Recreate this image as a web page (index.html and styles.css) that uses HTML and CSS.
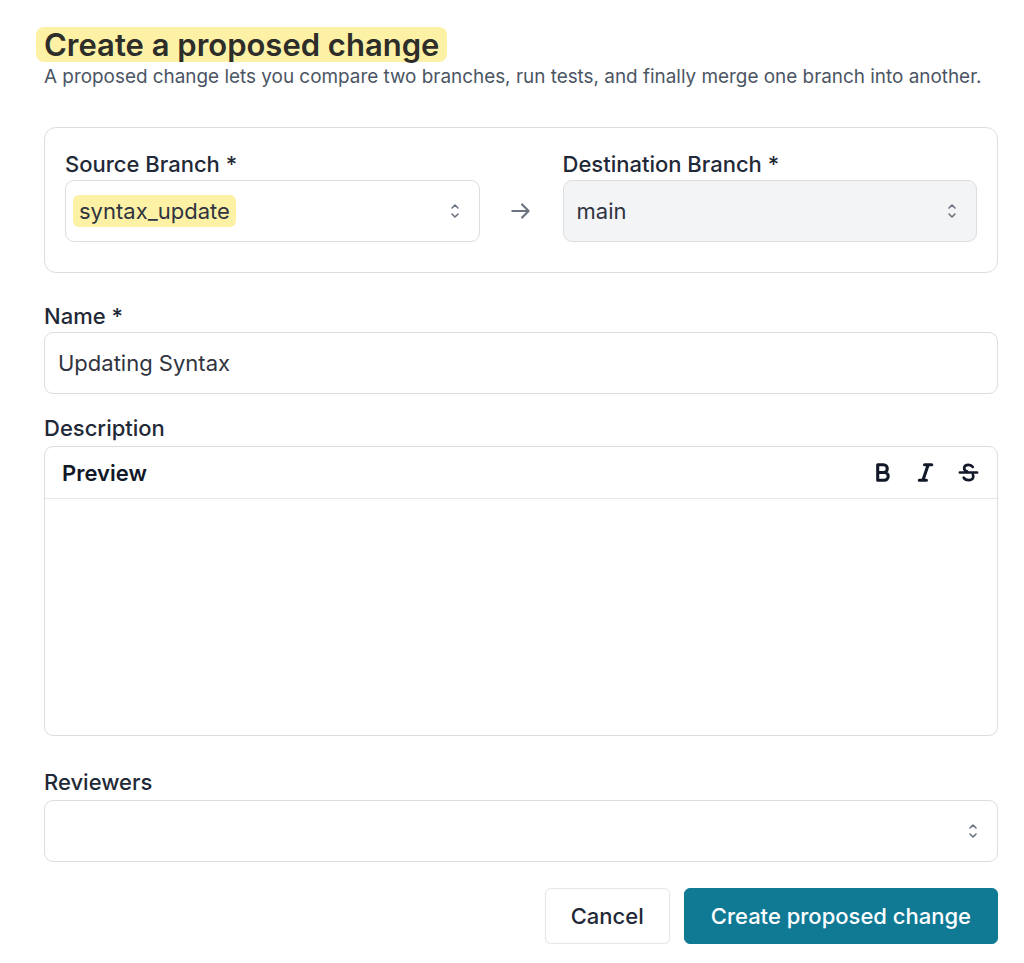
FILE: index.html
```html
<!DOCTYPE html>
<html lang="en">
<head>
<meta charset="utf-8">
<title>Create a proposed change</title>
<link rel="stylesheet" href="styles.css">
</head>
<body>
<main class="page">
  <h1 class="title"><span class="hl-title">Create a proposed change</span></h1>
  <p class="subtitle">A proposed change lets you compare two branches, run tests, and finally merge one branch into another.</p>

  <section class="branch-card">
    <div class="branch-field">
      <div class="label">Source Branch *</div>
      <div class="select">
        <span class="value"><span class="hl-value">syntax_update</span></span>
        <svg class="chev" viewBox="0 0 10 18" width="10" height="18"><path d="M2 6 L5 3 L8 6 M2 12 L5 15 L8 12" fill="none" stroke="#6b7280" stroke-width="1.6" stroke-linecap="round" stroke-linejoin="round"/></svg>
      </div>
    </div>
    <div class="arrow">
      <svg viewBox="0 0 24 24" width="26" height="26"><path d="M4 12h15M13 6l6 6-6 6" fill="none" stroke="#6b7280" stroke-width="2" stroke-linecap="round" stroke-linejoin="round"/></svg>
    </div>
    <div class="branch-field">
      <div class="label">Destination Branch *</div>
      <div class="select select-disabled">
        <span class="value">main</span>
        <svg class="chev" viewBox="0 0 10 18" width="10" height="18"><path d="M2 6 L5 3 L8 6 M2 12 L5 15 L8 12" fill="none" stroke="#6b7280" stroke-width="1.6" stroke-linecap="round" stroke-linejoin="round"/></svg>
      </div>
    </div>
  </section>

  <div class="field field-name">
    <div class="label">Name *</div>
    <div class="input">Updating Syntax</div>
  </div>

  <div class="field field-desc">
    <div class="label">Description</div>
    <div class="editor">
      <div class="editor-head">
        <span class="tab">Preview</span>
        <div class="tools">
          <svg viewBox="0 0 24 24" width="23" height="23"><path d="M7 4h6a4 4 0 0 1 0 8H7z M7 12h7a4 4 0 0 1 0 8H7z" fill="none" stroke="#111827" stroke-width="3.2" stroke-linejoin="round"/></svg>
          <svg viewBox="0 0 24 24" width="23" height="23"><path d="M5.5 20h7.5M11 4h7.5M9.3 20l5.5-16" fill="none" stroke="#111827" stroke-width="3.2" stroke-linecap="round" stroke-linejoin="round"/></svg>
          <svg viewBox="0 0 24 24" width="23" height="23"><path d="M16.5 6.2C15.6 4.9 14 4 12 4 9.2 4 7.5 5.6 7.5 7.5c0 1.6 1.1 2.7 3.2 3.4M16.6 14.6c.3.5.4 1 .4 1.5 0 2.2-2.1 3.9-5 3.9-2.3 0-4.1-1-5-2.6M3 12h18" fill="none" stroke="#111827" stroke-width="2.8" stroke-linecap="round" stroke-linejoin="round"/></svg>
        </div>
      </div>
      <div class="editor-body"></div>
    </div>
  </div>

  <div class="field field-reviewers">
    <div class="label">Reviewers</div>
    <div class="select">
      <span class="value"></span>
      <svg class="chev" viewBox="0 0 10 18" width="10" height="18"><path d="M2 6 L5 3 L8 6 M2 12 L5 15 L8 12" fill="none" stroke="#6b7280" stroke-width="1.6" stroke-linecap="round" stroke-linejoin="round"/></svg>
    </div>
  </div>

  <div class="actions">
    <button class="btn btn-cancel">Cancel</button>
    <button class="btn btn-primary">Create proposed change</button>
  </div>
</main>
</body>
</html>
```

FILE: styles.css
```css
* { box-sizing: border-box; }

html, body {
  margin: 0;
  padding: 0;
  background: #ffffff;
}

body {
  font-family: Inter, "Noto Sans", sans-serif;
  color: #1f2937;
}

.page {
  width: 954px;
  margin-left: 44px;
  padding-top: 27px;
}

.title {
  margin: 0;
  font-size: 31px;
  font-weight: 600;
  line-height: 35px;
  color: #2d2d2a;
}

.hl-title {
  display: inline-block;
  background: #fdf1a5;
  border-radius: 8px;
  padding: 0 8px;
  margin-left: -8px;
}

.subtitle {
  margin: 3px 0 0;
  font-size: 18.9px;
  line-height: 24px;
  color: #4b5563;
}

.branch-card {
  margin-top: 38px;
  border: 1px solid #dcdddf;
  border-radius: 12px;
  padding: 24px 20px 30px;
  display: flex;
  align-items: flex-end;
}

.branch-field {
  flex: 1;
}

.arrow {
  width: 83px;
  height: 62px;
  display: flex;
  align-items: center;
  justify-content: center;
}

.label {
  font-size: 22px;
  line-height: 24px;
  font-weight: 500;
  color: #1f2937;
  margin-bottom: 4px;
}

.select,
.input {
  height: 62px;
  border: 1px solid #dcdddf;
  border-radius: 9px;
  background: #ffffff;
  display: flex;
  align-items: center;
  padding: 0 19px 0 13px;
  font-size: 22px;
  color: #2f3440;
}

.select .value {
  flex: 1;
}

.select-disabled {
  background: #f3f4f6;
}

.hl-value {
  display: inline-block;
  background: #fdf1a5;
  border-radius: 6px;
  padding: 0 6px;
  margin-left: -6px;
  line-height: 32px;
}

.chev {
  flex: none;
}

.field-name {
  margin-top: 31px;
}

.field-desc {
  margin-top: 22px;
}

.field-desc .label {
  margin-bottom: 6px;
}

.editor {
  height: 290px;
  border: 1px solid #dcdddf;
  border-radius: 9px;
  display: flex;
  flex-direction: column;
  overflow: hidden;
}

.editor-head {
  height: 52px;
  border-bottom: 1px solid #e5e7eb;
  display: flex;
  align-items: center;
  justify-content: space-between;
  padding: 0 17px 0 17px;
}

.tab {
  font-size: 22px;
  font-weight: 600;
  color: #111827;
}

.tools {
  display: flex;
  gap: 20px;
  align-items: center;
}

.editor-body {
  flex: 1;
}

.field-reviewers {
  margin-top: 34px;
}

.field-reviewers .label {
  margin-bottom: 6px;
}

.actions {
  margin-top: 26px;
  display: flex;
  justify-content: flex-end;
  gap: 14px;
}

.btn {
  height: 56px;
  padding: 0 26px;
  border-radius: 6px;
  font-family: Inter, "Noto Sans", sans-serif;
  font-size: 22px;
  font-weight: 500;
  cursor: pointer;
}

.btn-cancel {
  background: #ffffff;
  border: 1px solid #e5e7eb;
  color: #1f2937;
  box-shadow: 0 1px 2px rgba(0,0,0,0.06);
  padding: 0 25px;
}

.btn-primary {
  background: #107a95;
  border: 1px solid #107a95;
  color: #ffffff;
}
```
